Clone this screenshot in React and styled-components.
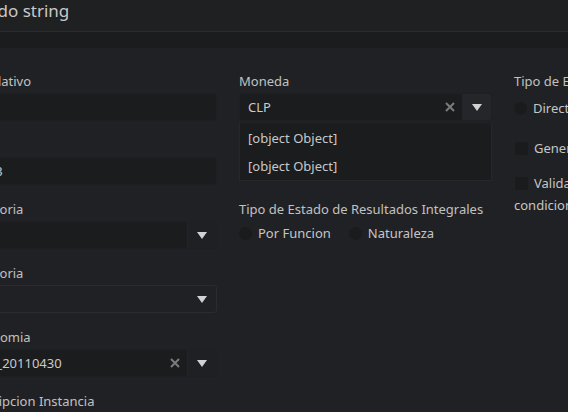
import React from 'react';
import styled, { createGlobalStyle } from 'styled-components';

const Global = createGlobalStyle`
  html, body {
    margin: 0;
    padding: 0;
    background: #202124;
    overflow: hidden;
  }
  body {
    font-family: "Noto Sans", "Open Sans", sans-serif;
    font-size: 13px;
    color: #c6c6c6;
  }
`;

const Modal = styled.div`
  width: 568px;
  height: 412px;
  overflow: hidden;
  display: flex;
  flex-direction: column;
`;

const Header = styled.div`
  flex: none;
  height: 31px;
  border-bottom: 1px solid #2a2b2e;
  background: #1f2022;
  display: flex;
  align-items: flex-start;
  margin-left: -53px;
  font-size: 17px;
  line-height: 22px;
  color: #c9c9c9;
  white-space: nowrap;
`;

const Band = styled.div`
  flex: none;
  height: 16px;
  background: #1b1c1e;
`;

const Body = styled.div`
  flex: 1;
  min-height: 0;
  display: grid;
  grid-template-columns: 253px 253px 253px;
  column-gap: 22px;
  margin-left: -36px;
  padding-top: 24px;
  align-items: start;
`;

const Column = styled.div`
  display: flex;
  flex-direction: column;
`;

const Field = styled.div`
  position: relative;
  display: flex;
  flex-direction: column;
  gap: 3px;
  margin-bottom: 15px;
`;

const Spacer = styled.div`
  height: 64px;
`;

const Label = styled.label`
  line-height: 18px;
  color: #c1c1c1;
  white-space: nowrap;
`;

const Input = styled.div`
  height: 28px;
  box-sizing: border-box;
  border: 1px solid #1e1f22;
  border-radius: 3px;
  background: #1b1c1e;
  padding: 0 8px;
  display: flex;
  align-items: center;
  color: #cacaca;
  white-space: nowrap;
`;

const Select = styled.div`
  height: 28px;
  box-sizing: border-box;
  border: 1px solid ${p => (p.$disabled ? '#2b2c2f' : '#1e1f22')};
  border-radius: 3px;
  background: ${p => (p.$disabled ? 'transparent' : '#1b1c1e')};
  display: flex;
  align-items: stretch;
  overflow: hidden;
`;

const Value = styled.div`
  flex: 1;
  display: flex;
  align-items: center;
  padding: 0 8px;
  color: #cacaca;
  white-space: nowrap;
`;

const Clear = styled.div`
  width: 24px;
  display: flex;
  align-items: center;
  justify-content: center;
`;

const Toggle = styled.div`
  width: 28px;
  display: flex;
  align-items: center;
  justify-content: center;
  background: ${p => (p.$open ? '#25262a' : p.$plain ? 'transparent' : '#1f2023')};
  border-left: 1px solid ${p => (p.$plain ? 'transparent' : '#232427')};
`;

const Menu = styled.div`
  position: absolute;
  top: 51px;
  left: 0;
  right: 0;
  padding-top: 1px;
  background: #1b1c1e;
  border: 1px solid #26272a;
  border-top: none;
  box-sizing: border-box;
  z-index: 2;
`;

const MenuItem = styled.div`
  height: 28px;
  padding: 0 8px;
  display: flex;
  align-items: center;
  color: #c8c8c8;
`;

const Options = styled.div`
  display: flex;
  gap: 18px;
  margin-top: ${p => p.$top || 3}px;
`;

const Option = styled.div`
  display: flex;
  align-items: center;
  gap: 6px;
  line-height: 18px;
  white-space: nowrap;
  color: #c6c6c6;
`;

const Radio = styled.span`
  width: 13px;
  height: 13px;
  border-radius: 50%;
  background: #1a1b1d;
  flex: none;
`;

const Box = styled.span`
  display: inline-block;
  width: 13px;
  height: 13px;
  border-radius: 2px;
  background: #1a1b1d;
  vertical-align: -2px;
  margin-right: 6px;
  margin-left: 1px;
`;

const Check = styled.div`
  line-height: 22px;
  margin-top: ${p => p.$top || 13}px;
  color: #c6c6c6;
`;

const X = () => (
  <svg width="10" height="10" viewBox="0 0 10 10">
    <path d="M1 1 L9 9 M9 1 L1 9" stroke="#7b7b7b" strokeWidth="2" />
  </svg>
);

const Caret = () => (
  <svg width="10" height="7" viewBox="0 0 10 7">
    <path d="M0 0 H10 L5 7 Z" fill="#d2d2d2" />
  </svg>
);

const DropSelect = ({ value, clear, disabled, open }) => (
  <Select $disabled={disabled}>
    <Value>{value}</Value>
    {clear && (
      <Clear>
        <X />
      </Clear>
    )}
    <Toggle $open={open} $plain={disabled}>
      <Caret />
    </Toggle>
  </Select>
);

export default function App() {
  return (
    <>
      <Global />
      <Modal>
        <Header>Editando string</Header>
        <Band />
        <Body>
          <Column>
            <Field>
              <Label>Correlativo</Label>
              <Input />
            </Field>
            <Field>
              <Label>Año</Label>
              <Input>2013</Input>
            </Field>
            <Field>
              <Label>Categoria</Label>
              <DropSelect value="" />
            </Field>
            <Field>
              <Label>Categoria</Label>
              <DropSelect value="" disabled />
            </Field>
            <Field>
              <Label>Taxonomia</Label>
              <DropSelect value="cl-ci_20110430" clear />
            </Field>
            <Field>
              <Label>Descripcion Instancia</Label>
              <Input />
            </Field>
          </Column>
          <Column>
            <Field>
              <Label>Moneda</Label>
              <DropSelect value="CLP" clear open />
              <Menu>
                <MenuItem>[object Object]</MenuItem>
                <MenuItem>[object Object]</MenuItem>
              </Menu>
            </Field>
            <Spacer />
            <Field>
              <Label>Tipo de Estado de Resultados Integrales</Label>
              <Options>
                <Option>
                  <Radio />
                  Por Funcion
                </Option>
                <Option>
                  <Radio />
                  Naturaleza
                </Option>
              </Options>
            </Field>
          </Column>
          <Column>
            <Field>
              <Label>Tipo de Estado de Flujo de Efectivo</Label>
              <Options $top={6}>
                <Option>
                  <Radio />
                  Directo
                </Option>
                <Option>
                  <Radio />
                  Indirecto
                </Option>
              </Options>
            </Field>
            <Check $top={5}>
              <Box />
              Generar Estados Financieros
            </Check>
            <Check>
              <Box />
              Validar Estados Financieros segun condiciones
            </Check>
          </Column>
        </Body>
      </Modal>
    </>
  );
}
